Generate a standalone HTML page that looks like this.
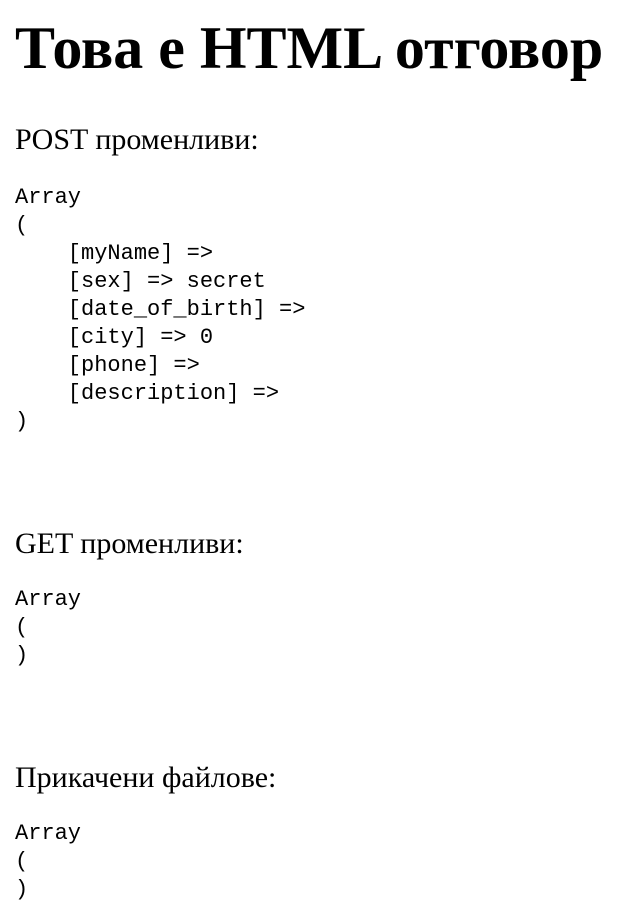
<!DOCTYPE html>
<html><head><meta charset="utf-8"><style>
body{margin:0;width:635px;height:919px;background:#fff;color:#000;position:relative;overflow:hidden}
.a{position:absolute;left:15px;margin:0;white-space:pre}
h1{font-family:"Liberation Serif",serif;font-size:60px;line-height:70px;font-weight:bold}
.t{font-family:"Liberation Serif",serif;font-size:30px;line-height:34px}
pre{font-family:"Liberation Mono",monospace;font-size:22px;line-height:28px}
</style></head><body>
<h1 class="a" style="top:13px">Това е HTML отговор</h1>
<div class="a t" style="top:123px">POST променливи:</div>
<pre class="a" style="top:184px">Array
(
    [myName] =&gt; 
    [sex] =&gt; secret
    [date_of_birth] =&gt; 
    [city] =&gt; 0
    [phone] =&gt; 
    [description] =&gt; 
)</pre>
<div class="a t" style="top:527px">GET променливи:</div>
<pre class="a" style="top:586px">Array
(
)</pre>
<div class="a t" style="top:761px">Прикачени файлове:</div>
<pre class="a" style="top:820px">Array
(
)</pre>
</body></html>
